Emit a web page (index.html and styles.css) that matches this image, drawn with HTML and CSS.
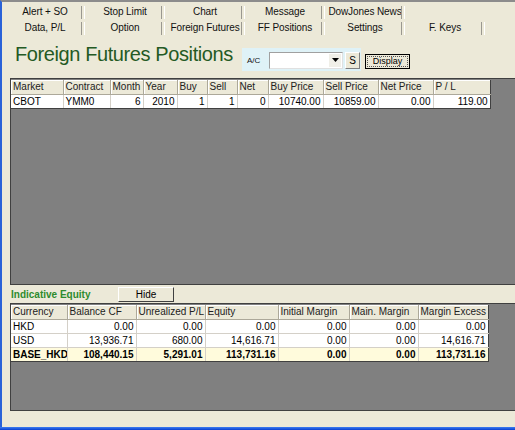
FILE: index.html
```html
<!DOCTYPE html>
<html>
<head>
<meta charset="utf-8">
<link rel="stylesheet" href="styles.css">
</head>
<body>
<div class="window">
  <div class="tabs">
    <div class="tabrow">
      <div class="tab">Alert + SO</div>
      <div class="tab">Stop Limit</div>
      <div class="tab">Chart</div>
      <div class="tab">Message</div>
      <div class="tab">DowJones News</div>
    </div>
    <div class="tabrow">
      <div class="tab">Data, P/L</div>
      <div class="tab">Option</div>
      <div class="tab">Foreign Futures</div>
      <div class="tab active">FF Positions</div>
      <div class="tab">Settings</div>
      <div class="tab">F. Keys</div>
    </div>
  </div>
  <div class="header">
    <h1 class="title">Foreign Futures Positions</h1>
    <div class="acbox">
      <span class="aclabel">A/C</span>
      <div class="combo"><span class="combo-arrow"><svg width="7" height="4" viewBox="0 0 7 4"><path d="M0 0h7L3.5 4z" fill="#000"/></svg></span></div>
      <div class="sbtn">S</div>
    </div>
    <div class="display-btn"><span>Display</span></div>
  </div>
  <div class="panel top-panel">
    <table class="grid positions">
      <colgroup>
        <col style="width:52px"><col style="width:47px"><col style="width:33px"><col style="width:34px"><col style="width:30px"><col style="width:30px"><col style="width:31px"><col style="width:55px"><col style="width:55px"><col style="width:55px"><col style="width:57px">
      </colgroup>
      <thead>
        <tr><th>Market</th><th>Contract</th><th>Month</th><th>Year</th><th>Buy</th><th>Sell</th><th>Net</th><th>Buy Price</th><th>Sell Price</th><th>Net Price</th><th>P / L</th></tr>
      </thead>
      <tbody>
        <tr><td>CBOT</td><td>YMM0</td><td class="num">6</td><td class="num">2010</td><td class="num">1</td><td class="num">1</td><td class="num">0</td><td class="num">10740.00</td><td class="num">10859.00</td><td class="num">0.00</td><td class="num">119.00</td></tr>
      </tbody>
    </table>
  </div>
  <div class="equity-bar">
    <span class="equity-label">Indicative Equity</span>
    <div class="hide-btn">Hide</div>
  </div>
  <div class="panel bottom-panel">
    <table class="grid equity">
      <colgroup>
        <col style="width:56px"><col style="width:69px"><col style="width:69px"><col style="width:73px"><col style="width:71px"><col style="width:69px"><col style="width:70px">
      </colgroup>
      <thead>
        <tr><th>Currency</th><th>Balance CF</th><th>Unrealized P/L</th><th>Equity</th><th>Initial Margin</th><th>Main. Margin</th><th>Margin Excess</th></tr>
      </thead>
      <tbody>
        <tr><td>HKD</td><td class="num">0.00</td><td class="num">0.00</td><td class="num">0.00</td><td class="num">0.00</td><td class="num">0.00</td><td class="num">0.00</td></tr>
        <tr><td>USD</td><td class="num">13,936.71</td><td class="num">680.00</td><td class="num">14,616.71</td><td class="num">0.00</td><td class="num">0.00</td><td class="num">14,616.71</td></tr>
        <tr class="total"><td>BASE_HKD</td><td class="num">108,440.15</td><td class="num">5,291.01</td><td class="num">113,731.16</td><td class="num">0.00</td><td class="num">0.00</td><td class="num">113,731.16</td></tr>
      </tbody>
    </table>
  </div>
  <div class="footer-space"></div>
  <div class="frame-bottom"></div>
</div>
</body>
</html>
```
FILE: styles.css
```css
* { box-sizing: border-box; }
html, body {
  margin: 0;
  padding: 0;
  width: 515px;
  height: 430px;
  overflow: hidden;
  background: #ece9d8;
  font-family: "Liberation Sans", Arial, sans-serif;
  font-size: 10px;
  color: #000;
}
.window {
  width: 515px;
  height: 430px;
  border-left: 2px solid #2a62d8;
  border-top: 2px solid #8c8c8c;
  display: flex;
  flex-direction: column;
  background: #ece9d8;
}
.tabs {
  padding: 3px 0 0 3px;
  display: flex;
  flex-direction: column;
  gap: 1px;
  height: 35px;
}
.tabrow {
  display: flex;
  height: 15px;
}
.tab {
  width: 80px;
  height: 15px;
  line-height: 14px;
  text-align: center;
  color: #111;
  position: relative;
  white-space: nowrap;
  letter-spacing: -0.1px;
}
.tab::after {
  content: "";
  position: absolute;
  right: 0;
  top: 1px;
  bottom: 1px;
  width: 2px;
  border-left: 1px solid #9a9890;
  border-right: 1px solid #ffffff;
}
.header {
  height: 41px;
  display: flex;
  align-items: flex-start;
  padding-left: 13px;
}
.title {
  margin: 6px 0 0 0;
  font-weight: normal;
  font-size: 20px;
  letter-spacing: -0.4px;
  line-height: 23px;
  color: #245a24;
  width: 227px;
  white-space: nowrap;
}
.acbox {
  margin-top: 11px;
  height: 23px;
  width: 119px;
  background: #dff2f7;
  display: flex;
  align-items: center;
  padding-left: 5px;
  padding-top: 1px;
}
.aclabel {
  font-size: 8px;
  width: 22px;
  color: #111;
}
.combo {
  width: 74px;
  height: 17px;
  background: #fff;
  border: 1px solid #a0a0a0;
  border-right-color: #e0e0e0;
  border-bottom-color: #e0e0e0;
  position: relative;
}
.combo-arrow {
  position: absolute;
  right: 1px;
  top: 1px;
  width: 12px;
  height: 13px;
  display: flex;
  align-items: center;
  justify-content: center;
  background: #f0efe8;
}
.sbtn {
  margin-left: 2px;
  width: 15px;
  height: 17px;
  background: #ece9d8;
  border: 1px solid #fff;
  border-right-color: #808080;
  border-bottom-color: #808080;
  text-align: center;
  line-height: 15px;
  font-size: 10px;
}
.display-btn {
  margin-top: 17px;
  margin-left: 4px;
  width: 45px;
  height: 15px;
  border: 1px solid #000;
  background: #ece9d8;
  padding: 1px;
}
.display-btn span {
  display: block;
  height: 100%;
  border: 1px dotted #555;
  font-size: 9px;
  line-height: 9px;
  text-align: center;
}
.panel {
  margin-left: 8px;
  background: #808080;
  border-top: 1px solid #404040;
  border-left: 1px solid #404040;
  border-bottom: 1px solid #404040;
}
.top-panel {
  height: 207px;
  padding-top: 1px;
}
.bottom-panel {
  height: 108px;
  padding-top: 1px;
}
.grid {
  border-collapse: collapse;
  table-layout: fixed;
  background: #fff;
}
.positions { width: 479px; }
.equity { width: 477px; }
.grid th, .grid td {
  height: 14px;
  padding: 0 2px 0 2px;
  white-space: nowrap;
  overflow: hidden;
  font-weight: normal;
  text-align: left;
  line-height: 13px;
}
.grid th {
  background: #ece9d8;
  border-right: 1px solid #aca899;
  border-bottom: 1px solid #aca899;
  box-shadow: inset 1px 1px 0 #fff;
  color: #222;
}
.grid td {
  border-right: 1px solid #d4d0c8;
  border-bottom: 1px solid #d4d0c8;
}
.grid td.num { text-align: right; }
.grid tbody tr:last-child td { border-bottom: 1px solid #404040; }
.grid tr td:last-child, .grid tr th:last-child { border-right: 1px solid #404040; }
.total td {
  background: #fffbdc;
  font-weight: bold;
}
.equity-bar {
  height: 18px;
  display: flex;
  align-items: center;
  padding-left: 9px;
}
.equity-label {
  color: #2e8b2e;
  font-weight: bold;
  width: 107px;
}
.hide-btn {
  width: 56px;
  height: 15px;
  margin-top: 1px;
  background: #ece9d8;
  border: 1px solid #fff;
  border-right-color: #404040;
  border-bottom-color: #404040;
  text-align: center;
  line-height: 13px;
  font-size: 10px;
}
.footer-space { height: 16px; }
.frame-bottom {
  height: 3px;
  background: linear-gradient(#3c7df2, #0a3fcf);
  margin-left: -2px;
}
```
